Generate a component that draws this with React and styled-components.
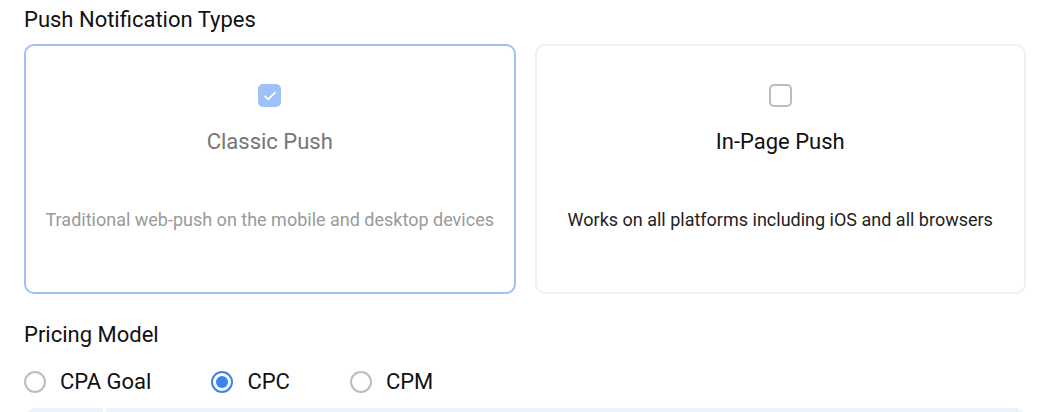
import React, { useState } from "react";
import styled, { createGlobalStyle } from "styled-components";

const GlobalStyle = createGlobalStyle`
  body {
    margin: 0;
    background: #ffffff;
    font-family: Roboto, "Noto Sans", Arial, sans-serif;
    color: #111111;
    overflow: hidden;
  }
`;

const Page = styled.div`
  padding: 7px 26px 0 24px;
  width: 1052px;
  height: 412px;
  box-sizing: border-box;
  overflow: hidden;
`;

const SectionTitle = styled.div`
  font-size: 22px;
  line-height: 26px;
  color: #111111;
  margin-top: ${(p) => p.$gap || 0}px;
`;

const CardGrid = styled.div`
  display: grid;
  grid-template-columns: 1fr 1fr;
  gap: 19px;
  margin-top: 11px;
`;

const Card = styled.div`
  height: 250px;
  box-sizing: border-box;
  border: 2px solid ${(p) => (p.$selected ? "#9ec1f8" : "#f0f0f0")};
  border-radius: 10px;
  display: flex;
  flex-direction: column;
  align-items: center;
  padding-top: 38px;
  cursor: pointer;
`;

const Box = styled.div`
  width: 23px;
  height: 23px;
  box-sizing: border-box;
  border-radius: 5px;
  border: 2px solid ${(p) => (p.$checked ? "#9ec1f8" : "#bdbdbd")};
  background: ${(p) => (p.$checked ? "#9ec1f8" : "#ffffff")};
  display: flex;
  align-items: center;
  justify-content: center;
`;

const CardTitle = styled.div`
  margin-top: 22px;
  font-size: 22px;
  line-height: 26px;
  color: ${(p) => (p.$selected ? "#767676" : "#111111")};
`;

const CardText = styled.div`
  margin-top: 54px;
  font-size: 18px;
  line-height: 22px;
  color: ${(p) => (p.$selected ? "#9a9a9a" : "#222222")};
`;

const RadioRow = styled.div`
  display: flex;
  align-items: center;
  gap: 60px;
  margin-top: 21px;
`;

const RadioItem = styled.label`
  display: flex;
  align-items: center;
  gap: 14px;
  font-size: 22px;
  line-height: 26px;
  color: #111111;
  cursor: pointer;
`;

const Circle = styled.span`
  width: 22px;
  height: 22px;
  box-sizing: border-box;
  border-radius: 50%;
  border: 2px solid ${(p) => (p.$on ? "#3b82f6" : "#bdbdbd")};
  display: flex;
  align-items: center;
  justify-content: center;

  &::after {
    content: "";
    width: 12px;
    height: 12px;
    border-radius: 50%;
    background: ${(p) => (p.$on ? "#3b82f6" : "transparent")};
  }
`;

const Strip = styled.div`
  margin-top: 13px;
  margin-left: 3px;
  margin-right: 2px;
  height: 40px;
  display: grid;
  grid-template-columns: 76px 1fr;
  gap: 3px;
`;

const StripCell = styled.div`
  background: #eaf3fe;
  border-radius: ${(p) => (p.$first ? "8px 0 0 0" : "0 8px 0 0")};
`;

const Check = () => (
  <svg width="16" height="16" viewBox="0 0 16 16" fill="none">
    <path d="M3 8.4l3.2 3L13 4.6" stroke="#ffffff" strokeWidth="1.7" strokeLinecap="round" strokeLinejoin="round" />
  </svg>
);

const types = [
  { id: "classic", title: "Classic Push", text: "Traditional web-push on the mobile and desktop devices" },
  { id: "inpage", title: "In-Page Push", text: "Works on all platforms including iOS and all browsers" },
];

const models = ["CPA Goal", "CPC", "CPM"];

export default function App() {
  const [type, setType] = useState("classic");
  const [model, setModel] = useState("CPC");

  return (
    <Page>
      <GlobalStyle />
      <SectionTitle>Push Notification Types</SectionTitle>
      <CardGrid>
        {types.map((t) => {
          const on = t.id === type;
          return (
            <Card key={t.id} $selected={on} onClick={() => setType(t.id)}>
              <Box $checked={on}>{on && <Check />}</Box>
              <CardTitle $selected={on}>{t.title}</CardTitle>
              <CardText $selected={on}>{t.text}</CardText>
            </Card>
          );
        })}
      </CardGrid>
      <SectionTitle $gap={28}>Pricing Model</SectionTitle>
      <RadioRow>
        {models.map((m) => (
          <RadioItem key={m} onClick={() => setModel(m)}>
            <Circle $on={m === model} />
            {m}
          </RadioItem>
        ))}
      </RadioRow>
      <Strip>
        <StripCell $first />
        <StripCell />
      </Strip>
    </Page>
  );
}
